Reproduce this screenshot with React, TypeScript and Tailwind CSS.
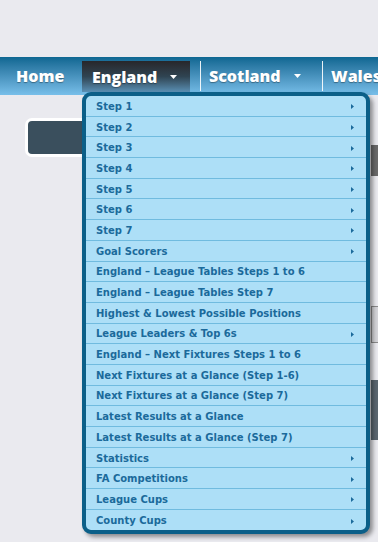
import React from "react";

const items: { label: string; arrow: boolean }[] = [
  { label: "Step 1", arrow: true },
  { label: "Step 2", arrow: true },
  { label: "Step 3", arrow: true },
  { label: "Step 4", arrow: true },
  { label: "Step 5", arrow: true },
  { label: "Step 6", arrow: true },
  { label: "Step 7", arrow: true },
  { label: "Goal Scorers", arrow: true },
  { label: "England – League Tables Steps 1 to 6", arrow: false },
  { label: "England – League Tables Step 7", arrow: false },
  { label: "Highest & Lowest Possible Positions", arrow: false },
  { label: "League Leaders & Top 6s", arrow: true },
  { label: "England – Next Fixtures Steps 1 to 6", arrow: false },
  { label: "Next Fixtures at a Glance (Step 1-6)", arrow: false },
  { label: "Next Fixtures at a Glance (Step 7)", arrow: false },
  { label: "Latest Results at a Glance", arrow: false },
  { label: "Latest Results at a Glance (Step 7)", arrow: false },
  { label: "Statistics", arrow: true },
  { label: "FA Competitions", arrow: true },
  { label: "League Cups", arrow: true },
  { label: "County Cups", arrow: true },
];

const Caret = () => (
  <svg width="9" height="6" viewBox="0 0 9 6" className="ml-[12px] shrink-0">
    <path d="M1 1 L8 1 L4.5 5 Z" fill="#ffffff" />
  </svg>
);

export default function App() {
  return (
    <div className="relative w-[378px] h-[542px] overflow-hidden bg-[#eaeaef]">
      <div className="h-[57px]" />
      <nav
        className="flex h-[38px] items-stretch bg-gradient-to-b from-[#0c6792] to-[#78bfea] text-white font-extrabold text-[16px] whitespace-nowrap"
        style={{ fontFamily: "'Open Sans', 'DejaVu Sans', sans-serif", textShadow: "0 1px 1px rgba(0,0,0,0.35)" }}
      >
        <div className="flex shrink-0 items-center pl-[16px] w-[82px]">Home</div>
        <div className="mt-[4px] mb-[3px] flex shrink-0 w-[108px] items-center pl-[10px] bg-gradient-to-b from-[#27272b] via-[#2f4452] to-[#5a90b5]">
          England
          <Caret />
        </div>
        <div className="w-[10px] shrink-0" />
        <div className="my-[4px] w-px shrink-0 bg-white/90" />
        <div className="flex shrink-0 w-[121px] items-center pl-[8px]">
          Scotland
          <Caret />
        </div>
        <div className="my-[4px] w-px shrink-0 bg-white/90" />
        <div className="flex shrink-0 items-center pl-[8px]">Wales</div>
      </nav>

      <div className="relative">
        <div className="ml-[25px] mt-[23px] h-[39px] w-[120px] rounded-[7px] border-[3px] border-white bg-[#3a4f5d]" />
        <div className="absolute left-[371px] top-[27px] h-[31px] w-[10px] bg-[#6a6a6a]" />
        <div className="absolute left-[371px] top-[188px] h-[37px] w-[10px] border border-[#8a8a8a] bg-[#d4d4d8]" />
        <div className="absolute left-[371px] top-[262px] h-[60px] w-[10px] bg-[#5b6770]" />
      </div>

      <div
        className="absolute left-[82px] top-[92px] w-[288px] rounded-[9px] border-[4px] border-[#0b5f88] bg-[#addff7] shadow-[3px_3px_4px_rgba(0,0,0,0.4)]"
        style={{ fontFamily: "'DejaVu Sans', Verdana, sans-serif" }}
      >
        {items.map((it, i) => (
          <div
            key={it.label}
            className={
              "flex h-[20.7px] items-center justify-between pl-[10px] pr-[12px] pt-[2px] text-[10px] font-bold text-[#1b6a9b] " +
              (i < items.length - 1 ? "border-b border-[#70bbdf]" : "")
            }
          >
            <span className="whitespace-nowrap leading-none">{it.label}</span>
            {it.arrow && (
              <svg width="3" height="5" viewBox="0 0 3 5">
                <path d="M0 0 L3 2.5 L0 5 Z" fill="#1b6a9b" />
              </svg>
            )}
          </div>
        ))}
      </div>
    </div>
  );
}
